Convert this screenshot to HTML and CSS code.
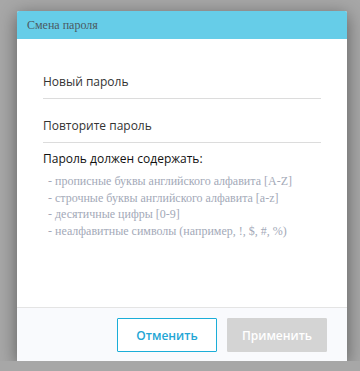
FILE: index.html
```html
<!doctype html>
<html lang="ru">
<head>
  <meta charset="utf-8">
  <title>Смена пароля</title>
  <link rel="stylesheet" href="styles.css">
</head>
<body>

<div class="modal">
  <div class="modal-header">Смена пароля</div>

  <div class="modal-body">
    <div class="field">Новый пароль</div>
    <div class="field">Повторите пароль</div>

    <div class="rules-title">Пароль должен содержать:</div>
    <ul class="rules">
      <li>- прописные буквы английского алфавита [A-Z]</li>
      <li>- строчные буквы английского алфавита [a-z]</li>
      <li>- десятичные цифры [0-9]</li>
      <li>- неалфавитные символы (например, !, $, #, %)</li>
    </ul>
  </div>

  <div class="modal-footer">
    <button class="btn btn-cancel" type="button">Отменить</button>
    <button class="btn btn-apply" type="button" disabled>Применить</button>
  </div>
</div>

</body>
</html>
```

FILE: styles.css
```css
html {
  background-color: #a7a7a7;
}

body {
  margin: 0;
  padding: 11px 13px 0 17px;
  font-family: "Open Sans", sans-serif;
}

/* Dialog box */

.modal {
  display: flex;
  flex-direction: column;
  width: 330px;
  height: 350px;
  background-color: #fff;
  border-radius: 2px 2px 0 0;
  box-shadow: 0 4px 18px rgba(0, 0, 0, 0.45);
}

.modal-header {
  height: 28px;
  padding: 0 10px;
  background-color: #66cde8;
  border-radius: 2px 2px 0 0;
  color: #4b5a62;
  font-family: "Liberation Serif", serif;
  font-size: 12px;
  line-height: 28px;
}

.modal-body {
  flex: 1;
  padding: 16px 26px 0;
}

.field {
  padding: 17px 0 6px;
  border-bottom: 1px solid #dcdcdc;
  color: #333;
  font-size: 12px;
  line-height: 20px;
}

.rules-title {
  margin-top: 7px;
  color: #111;
  font-size: 12px;
  line-height: 18px;
}

.rules {
  list-style: none;
  margin: 5px 0 0;
  padding: 0 0 0 5px;
  color: #a3a9b8;
  font-family: "Liberation Serif", serif;
  font-size: 12px;
  line-height: 16.5px;
}

/* Footer with buttons */

.modal-footer {
  display: flex;
  justify-content: flex-end;
  gap: 10px;
  height: 54px;
  padding: 10px 20px 0;
  border-top: 1px solid #e4e4e4;
  background-color: #f9fafd;
  box-sizing: border-box;
}

.btn {
  width: 100px;
  height: 34px;
  border-radius: 1px;
  font-family: inherit;
  font-size: 12px;
  font-weight: 600;
  cursor: pointer;
}

.btn-cancel {
  background-color: #fff;
  border: 1px solid #1badd8;
  color: #23a6d5;
}

.btn-apply {
  background-color: #d4d4d4;
  border: 1px solid #d4d4d4;
  color: #fff;
}
```
